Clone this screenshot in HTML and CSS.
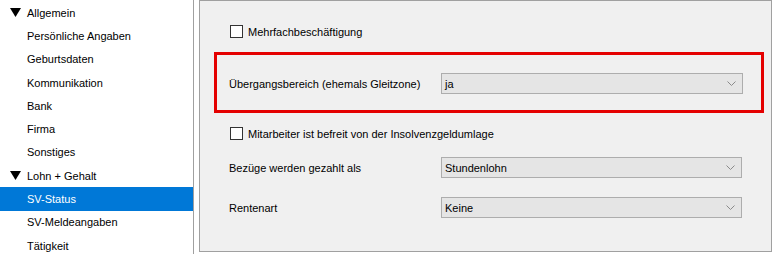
FILE: index.html
```html
<!DOCTYPE html>
<html lang="de">
<head>
    <meta charset="UTF-8">
    <title>SV-Status</title>
    <link rel="stylesheet" href="styles.css">
</head>
<body>
    <div class="window">
        <nav class="tree">
            <div class="node group"><span class="arrow"><svg width="11" height="9" viewBox="0 0 11 9"><path d="M0 0H11L5.5 9Z" fill="#000"/></svg></span>Allgemein</div>
            <div class="node">Persönliche Angaben</div>
            <div class="node">Geburtsdaten</div>
            <div class="node">Kommunikation</div>
            <div class="node">Bank</div>
            <div class="node">Firma</div>
            <div class="node">Sonstiges</div>
            <div class="node group"><span class="arrow"><svg width="11" height="9" viewBox="0 0 11 9"><path d="M0 0H11L5.5 9Z" fill="#000"/></svg></span>Lohn + Gehalt</div>
            <div class="node selected">SV-Status</div>
            <div class="node">SV-Meldeangaben</div>
            <div class="node">Tätigkeit</div>
        </nav>
        <div class="split"></div>
        <section class="panel">
            <label class="check-row first"><span class="box"></span>Mehrfachbeschäftigung</label>
            <div class="highlight">
                <div class="field">
                    <span class="label">Übergangsbereich (ehemals Gleitzone)</span>
                    <div class="combo">ja<svg class="chev" width="9" height="5" viewBox="0 0 9 5"><path d="M0.5 0.5L4.5 4.5L8.5 0.5" fill="none" stroke="#8a8a8a"/></svg></div>
                </div>
            </div>
            <label class="check-row second"><span class="box"></span>Mitarbeiter ist befreit von der Insolvenzgeldumlage</label>
            <div class="field row">
                <span class="label">Bezüge werden gezahlt als</span>
                <div class="combo">Stundenlohn<svg class="chev" width="9" height="5" viewBox="0 0 9 5"><path d="M0.5 0.5L4.5 4.5L8.5 0.5" fill="none" stroke="#8a8a8a"/></svg></div>
            </div>
            <div class="field row last">
                <span class="label">Rentenart</span>
                <div class="combo">Keine<svg class="chev" width="9" height="5" viewBox="0 0 9 5"><path d="M0.5 0.5L4.5 4.5L8.5 0.5" fill="none" stroke="#8a8a8a"/></svg></div>
            </div>
        </section>
    </div>
</body>
</html>
```
FILE: styles.css
```css
body {
    margin: 0;
    padding: 0;
    background-color: #ffffff;
    font-family: "Liberation Sans", Arial, sans-serif;
    font-size: 11px;
    color: #000;
}
.window {
    display: flex;
    width: 772px;
    height: 254px;
}
.tree {
    width: 193px;
    border-right: 1px solid #a0a0a0;
    padding-top: 1px;
    background-color: #fff;
    overflow: hidden;
}
.node {
    height: 23.3px;
    display: flex;
    align-items: center;
    padding-left: 27px;
}
.node.group {
    padding-left: 10px;
}
.arrow {
    display: flex;
    width: 17px;
}
.node.selected {
    background-color: #0078d7;
    color: #fff;
}
.split {
    width: 5px;
    background-color: #fff;
}
.panel {
    flex: 1;
    height: 250px;
    border: 1px solid #a0a0a0;
    background-color: #f0f0f0;
    display: flex;
    flex-direction: column;
}
.check-row {
    display: flex;
    align-items: center;
    height: 13px;
    margin-left: 30px;
}
.check-row.first {
    margin-top: 24px;
}
.check-row.second {
    margin-top: 14px;
}
.box {
    width: 11px;
    height: 11px;
    border: 1px solid #333;
    background-color: #fff;
    margin-right: 5px;
}
.highlight {
    margin: 14px 7px 0 14px;
    border: 3px solid #e40000;
    padding: 18px 18px 16px 12px;
}
.field {
    display: flex;
    align-items: center;
}
.field.row {
    margin: 17px 29px 0 29px;
}
.field.row.last {
    margin-top: 19px;
}
.label {
    width: 212px;
}
.combo {
    flex: 1;
    height: 19px;
    border: 1px solid #adadad;
    background-color: #e5e5e5;
    display: flex;
    align-items: center;
    justify-content: space-between;
    padding: 0 6px 0 3px;
}
```
